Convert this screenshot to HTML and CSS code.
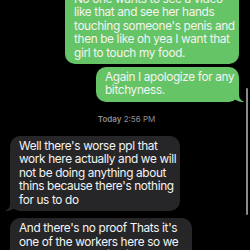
FILE: index.html
```html
<!DOCTYPE html>
<html>
<head>
<meta charset="utf-8">
<link rel="stylesheet" href="styles.css">
</head>
<body>
<div class="thread">
  <div class="bubble sent b1">No one wants to see a video<br>like that and see her hands<br>touching someone's penis and<br>then be like oh yea I want that<br>girl to touch my food.</div>
  <div class="bubble sent tail b2">Again I apologize for any<br>bitchyness.</div>
  <div class="stamp"><span class="day">Today</span> 2:56 PM</div>
  <div class="bubble recv tail b3">Well there's worse ppl that<br>work here actually and we will<br>not be doing anything about<br>thins because there's nothing<br>for us to do</div>
  <div class="bubble recv b4">And there's no proof Thats it's<br>one of the workers here so we<br>can not do anything in that way</div>
</div>
<div class="scrollbar"></div>
</body>
</html>
```
FILE: styles.css
```css
html, body {
  margin: 0;
  padding: 0;
  background: #000;
  width: 250px;
  height: 250px;
  overflow: hidden;
}
body {
  position: relative;
  font-family: Inter, "Noto Sans", sans-serif;
  -webkit-font-smoothing: antialiased;
}
.thread {
  display: flex;
  flex-direction: column;
  padding: 0 11px 0 10px;
  margin-top: -12px;
}
.bubble {
  position: relative;
  box-sizing: border-box;
  font-size: 11.8px;
  letter-spacing: -0.35px;
  line-height: 13.4px;
  color: #f4f4f4;
  border-radius: 10px;
  white-space: nowrap;
}
.sent {
  align-self: flex-end;
  background: #65c466;
  padding: 5px 9px 4px 9px;
}
.recv {
  align-self: flex-start;
  background: #262628;
  padding: 4px 9px 4px 9px;
  line-height: 13.5px;
}
.b1 { width: 174px; }
.b2 { width: 143px; margin-top: 3px; padding-top: 4px; }
.b3 { width: 170px; margin-top: 12px; }
.b4 { width: 182px; margin-top: 7px; }
.sent.tail::before,
.sent.tail::after,
.recv.tail::before,
.recv.tail::after {
  content: "";
  position: absolute;
  bottom: 0;
  height: 14px;
}
.sent.tail::before {
  right: -5px;
  width: 12px;
  background: #65c466;
  border-bottom-left-radius: 10px 9px;
}
.sent.tail::after {
  right: -14px;
  width: 14px;
  background: #000;
  border-bottom-left-radius: 7px;
}
.recv.tail::before {
  left: -5px;
  width: 12px;
  background: #262628;
  border-bottom-right-radius: 10px 9px;
}
.recv.tail::after {
  left: -14px;
  width: 14px;
  background: #000;
  border-bottom-right-radius: 7px;
}
.stamp {
  align-self: center;
  margin-top: 12px;
  font-size: 8px;
  line-height: 10px;
  color: #8e8e93;
  margin-left: 4px;
}
.day { font-weight: 600; }
.scrollbar {
  position: absolute;
  left: 246px;
  top: 88px;
  width: 2px;
  height: 127px;
  border-radius: 1px;
  background: #8a8a8a;
}
```
